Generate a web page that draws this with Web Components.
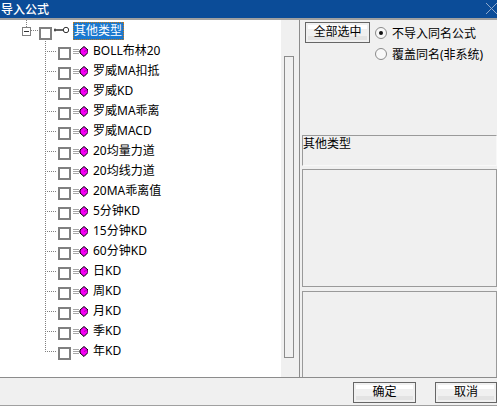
<!DOCTYPE html>
<html lang="zh">
<head>
<meta charset="utf-8">
<title>导入公式</title>
<style>
  html, body { margin: 0; height: 100%; overflow: hidden; }
  body { font: 12px "Noto Sans", "Noto Sans CJK SC", sans-serif; color: #000; background: #f0f0f0; }
</style>
</head>
<body>
<import-dialog heading="导入公式">
  <formula-tree slot="tree" label="其他类型">
    <tree-item>BOLL布林20</tree-item>
    <tree-item>罗威MA扣抵</tree-item>
    <tree-item>罗威KD</tree-item>
    <tree-item>罗威MA乖离</tree-item>
    <tree-item>罗威MACD</tree-item>
    <tree-item>20均量力道</tree-item>
    <tree-item>20均线力道</tree-item>
    <tree-item>20MA乖离值</tree-item>
    <tree-item>5分钟KD</tree-item>
    <tree-item>15分钟KD</tree-item>
    <tree-item>60分钟KD</tree-item>
    <tree-item>日KD</tree-item>
    <tree-item>周KD</tree-item>
    <tree-item>月KD</tree-item>
    <tree-item>季KD</tree-item>
    <tree-item last>年KD</tree-item>
  </formula-tree>
  <side-panel slot="side"></side-panel>
</import-dialog>

<script>
class ImportDialog extends HTMLElement {
  connectedCallback() {
    let shadow = this.attachShadow({ mode: "open" });
    shadow.innerHTML = `
    <style>
      :host {
        display: flex;
        flex-direction: column;
        height: 406px;
        width: 497px;
        background: #f0f0f0;
      }
      .title {
        height: 18px;
        background: #0b4c98;
        color: #fff;
        display: flex;
        align-items: center;
        justify-content: space-between;
        padding-left: 1px;
        border-bottom: 2px solid #a0a0a0;
        font-size: 12px;
        font-weight: 500;
      }
      .title svg { margin-top: -2px; }
      .main {
        flex: none;
        height: 357px;
        display: flex;
        border-bottom: 1px solid #8c8c8c;
      }
      .tree { flex: none; width: 299px; border-right: 1px solid #8c8c8c; display: flex; }
      .side { flex: 1; min-width: 0; }
      .foot {
        flex: 1;
        display: flex;
        justify-content: flex-end;
        gap: 19px;
        padding-top: 4px;
        border-bottom: 1px solid #a0a0a0;
        box-sizing: border-box;
      }
    </style>
    <div class="title">
      <span>${this.getAttribute("heading")}</span>
      <svg width="11" height="11" viewBox="0 0 11 11"><path d="M0 0L11 11M11 0L0 11" stroke="#8fa9cc" fill="none"/></svg>
    </div>
    <div class="main">
      <div class="tree"><slot name="tree"></slot></div>
      <div class="side"><slot name="side"></slot></div>
    </div>
    <div class="foot">
      <dlg-button style="width:63px">确定</dlg-button>
      <dlg-button>取消</dlg-button>
    </div>
  `;
  }
}

class DlgButton extends HTMLElement {
  connectedCallback() {
    let shadow = this.attachShadow({ mode: "open" });
    shadow.innerHTML = `
    <style>
      :host {
        display: block;
        width: 62px;
        height: 21px;
        box-sizing: border-box;
        border: 1px solid #666;
        background:
          linear-gradient(#fff, #fff) 2px 2px / calc(100% - 4px) 4px no-repeat,
          linear-gradient(#e3e3e3, #e3e3e3) 2px calc(100% - 2px) / calc(100% - 4px) 4px no-repeat,
          #f0f0f0;
        text-align: center;
        line-height: 18px;
        font-size: 12px;
      }
    </style>
    <slot></slot>
  `;
  }
}

class FormulaTree extends HTMLElement {
  connectedCallback() {
    let shadow = this.attachShadow({ mode: "open" });
    shadow.innerHTML = `
    <style>
      :host { display: flex; width: 299px; height: 357px; background: #fff; }
      .list { flex: none; width: 281px; padding-top: 1px; box-sizing: border-box; }
      .root {
        height: 20px;
        display: flex;
        align-items: center;
        padding-left: 22px;
      }
      .expander-col {
        flex: none;
        width: 9px;
        height: 20px;
        display: flex;
        flex-direction: column;
        align-items: center;
        margin-top: -2px;
      }
      .stem { width: 1px; height: 7px; flex: none; background: repeating-linear-gradient(#808080 0 1px, transparent 1px 2px); }
      .expander {
        width: 7px;
        height: 7px;
        flex: none;
        border: 1px solid #808080;
        background: linear-gradient(#333, #333) center / 5px 1px no-repeat #fff;
      }
      .dash {
        width: 8px;
        height: 1px;
        margin-top: -2px;
        background: repeating-linear-gradient(90deg, #808080 0 1px, transparent 1px 2px);
      }
      .box {
        width: 9px;
        height: 9px;
        border: 2px solid #808080;
        background: #fff;
        margin-top: 5px;
      }
      svg { margin-left: 2px; flex: none; margin-bottom: 3px; }
      .name {
        margin-left: 3px;
        padding: 0 1px;
        height: 18px;
        line-height: 17px;
        background: #1a78cf;
        color: #fff;
        outline: 1px dotted #c87a18;
        outline-offset: -1px;
        width: 49px;
        white-space: nowrap;
      }
      .track {
        flex: 1;
        background: #f0f0f0;
        padding: 36px 5px 19px 3px;
      }
      .thumb { height: 100%; box-sizing: border-box; border: 1px solid #8c8c8c; background: #f0f0f0; }
    </style>
    <div class="list">
      <div class="root">
        <span class="expander-col"><span class="stem"></span><span class="expander"></span></span>
        <span class="dash"></span>
        <span class="box"></span>
        <svg width="16" height="8" viewBox="0 0 16 8"><path d="M0 4H9" stroke="#333" stroke-width="1.5"/><path d="M1 2.5V5.5" stroke="#333"/><circle cx="12" cy="4" r="2.7" fill="#fff" stroke="#333"/></svg>
        <span class="name">${this.getAttribute("label")}</span>
      </div>
      <slot></slot>
    </div>
    <div class="track"><div class="thumb"></div></div>
  `;
  }
}

class TreeItem extends HTMLElement {
  connectedCallback() {
    let shadow = this.attachShadow({ mode: "open" });
    shadow.innerHTML = `
    <style>
      :host {
        display: flex;
        align-items: center;
        height: 20px;
        padding-left: 45px;
        white-space: nowrap;
      }
      .conn {
        flex: none;
        width: 13px;
        height: 20px;
        background:
          repeating-linear-gradient(90deg, #808080 0 1px, transparent 1px 2px) 0 10px / 12px 1px no-repeat,
          repeating-linear-gradient(#808080 0 1px, transparent 1px 2px) 0 0 / 1px ${this.hasAttribute("last") ? "11px" : "20px"} no-repeat;
      }
      .box {
        flex: none;
        width: 9px;
        height: 9px;
        border: 2px solid #808080;
        background: #fff;
        margin-top: 5px;
      }
      svg { flex: none; margin-left: 2px; margin-top: 1px; }
      .text { margin-left: 5px; margin-top: -3px; }
    </style>
    <span class="conn"></span>
    <span class="box"></span>
    <svg width="15" height="11" viewBox="0 0 15 11">
      <path d="M0 3.5H6M0 5.5H7M0 7.5H6" stroke="#a8a8a8" fill="none"/>
      <path d="M11 .5L15 4V6.5L11 10.5L7 7V4Z" fill="#f400f4" stroke="#000"/>
      <path d="M11 5.5L14 4" stroke="#a000a0" stroke-width=".8"/>
    </svg>
    <span class="text"><slot></slot></span>
  `;
  }
}

class SidePanel extends HTMLElement {
  connectedCallback() {
    let shadow = this.attachShadow({ mode: "open" });
    shadow.innerHTML = `
    <style>
      :host {
        display: flex;
        flex-direction: column;
        height: 357px;
        box-sizing: border-box;
        padding: 2px 0 0 2px;
        background: #f0f0f0;
      }
      .top { flex: none; height: 113px; display: flex; align-items: flex-start; padding-left: 3px; gap: 5px; }
      .all {
        width: 65px;
        height: 21px;
        box-sizing: border-box;
        border: 1px solid #666;
        background:
          linear-gradient(#fff, #fff) 2px 2px / calc(100% - 4px) 4px no-repeat,
          linear-gradient(#e3e3e3, #e3e3e3) 2px calc(100% - 2px) / calc(100% - 4px) 4px no-repeat,
          #f0f0f0;
        text-align: center;
        line-height: 18px;
      }
      .radios { display: flex; flex-direction: column; }
      .radio { display: flex; align-items: center; gap: 5px; height: 21px; white-space: nowrap; }
      .dot {
        width: 10px;
        height: 10px;
        border-radius: 50%;
        border: 1px solid #8a8a8a;
        background: #f8f8f8;
        display: flex;
        align-items: center;
        justify-content: center;
      }
      .radio.on .dot::after { content: ""; width: 4px; height: 4px; border-radius: 50%; background: #111; }
      .pane { box-sizing: border-box; border: 1px solid #9a9a9a; background: #f0f0f0; }
      .p1 { height: 31px; margin-bottom: 3px; line-height: 16px; border-bottom-color: #f8f8f8; border-right-color: #f8f8f8; }
      .p2 { height: 118px; margin-bottom: 4px; }
      .p3 { flex: 1; border-bottom: none; }
    </style>
    <div class="top">
      <div class="all">全部选中</div>
      <div class="radios">
        <div class="radio on"><span class="dot"></span>不导入同名公式</div>
        <div class="radio"><span class="dot"></span>覆盖同名(非系统)</div>
      </div>
    </div>
    <div class="pane p1">其他类型</div>
    <div class="pane p2"></div>
    <div class="pane p3"></div>
  `;
  }
}

customElements.define("import-dialog", ImportDialog);
customElements.define("dlg-button", DlgButton);
customElements.define("formula-tree", FormulaTree);
customElements.define("tree-item", TreeItem);
customElements.define("side-panel", SidePanel);
</script>
</body>
</html>
